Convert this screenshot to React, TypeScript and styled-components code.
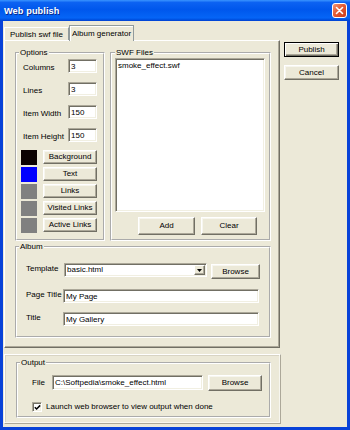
import React from 'react';
import styled, { createGlobalStyle } from 'styled-components';

const GlobalStyle = createGlobalStyle`
  html, body {
    margin: 0;
    padding: 0;
    background: #ffffff;
  }
  body {
    font-family: "Liberation Sans", Arial, sans-serif;
    font-size: 8px;
    color: #000;
  }
`;

const face = '#ece9d8';

const fields = [
  { label: 'Columns', value: '3' },
  { label: 'Lines', value: '3' },
  { label: 'Item Width', value: '150' },
  { label: 'Item Height', value: '150' },
];

const colors = [
  { label: 'Background', swatch: '#0c0202' },
  { label: 'Text', swatch: '#0000ff' },
  { label: 'Links', swatch: '#808080' },
  { label: 'Visited Links', swatch: '#808080' },
  { label: 'Active Links', swatch: '#808080' },
];

// XP style close glyph: rounded red square with a white cross
const CloseIcon = () => (
  <svg width="15" height="15" viewBox="0 0 15 15">
    <defs>
      <linearGradient id="closeFill" x1="0" y1="0" x2="1" y2="1">
        <stop offset="0" stopColor="#f29a7c" />
        <stop offset="0.45" stopColor="#e35d35" />
        <stop offset="1" stopColor="#c8381a" />
      </linearGradient>
    </defs>
    <rect x="0.5" y="0.5" width="14" height="14" rx="2.5" fill="url(#closeFill)" stroke="#ffffff" />
    <path d="M4.5 4.5L10.5 10.5M10.5 4.5L4.5 10.5" stroke="#ffffff" strokeWidth="1.6" strokeLinecap="round" />
  </svg>
);

export default function App() {
  return (
    <>
      <GlobalStyle />
      <Window>
        <TitleBar>
          <Title>Web publish</Title>
          <CloseButton aria-label="Close">
            <CloseIcon />
          </CloseButton>
        </TitleBar>
        <Client>
          <LeftCol>
            <TabStrip>
              <Tab>Publish swf file</Tab>
              <Tab $active>Album generator</Tab>
            </TabStrip>
            <Panel>
              <TopRow>
                <Group $w={90} $h={193}>
                  <Legend>Options</Legend>
                  <OptionsBody>
                    <FieldList>
                      {fields.map(f => (
                        <FieldRow key={f.label}>
                          <FieldLabel>{f.label}</FieldLabel>
                          <TextField $w={29} $h={14} readOnly value={f.value} />
                        </FieldRow>
                      ))}
                    </FieldList>
                    <ColorList>
                      {colors.map(c => (
                        <ColorRow key={c.label}>
                          <Swatch $c={c.swatch} />
                          <Button $w={54} $h={14}>{c.label}</Button>
                        </ColorRow>
                      ))}
                    </ColorList>
                  </OptionsBody>
                </Group>
                <Group $w={161} $h={193}>
                  <Legend $lm={3}>SWF Files</Legend>
                  <SwfBody>
                    <ListBox>
                      <ListItem>smoke_effect.swf</ListItem>
                    </ListBox>
                    <ListButtons>
                      <Button $w={57} $h={18}>Add</Button>
                      <Button $w={56} $h={18}>Clear</Button>
                    </ListButtons>
                  </SwfBody>
                </Group>
              </TopRow>
              <AlbumGroup $w={256} $h={96}>
                <Legend>Album</Legend>
                <AlbumBody>
                  <FormRow $h={16} $mb={10}>
                    <RowLabel>Template</RowLabel>
                    <Select>
                      <SelectText>basic.html</SelectText>
                      <DropButton>
                        <svg width="5" height="3" viewBox="0 0 5 3">
                          <path d="M0 0H5L2.5 3Z" fill="#000" />
                        </svg>
                      </DropButton>
                    </Select>
                    <BrowseButton $w={49} $h={15}>Browse</BrowseButton>
                  </FormRow>
                  <FormRow $h={14} $mb={9}>
                    <RowLabel>Page Title</RowLabel>
                    <TextField $w={196} $h={14} readOnly value="My Page" />
                  </FormRow>
                  <FormRow $h={14} $mb={0}>
                    <RowLabel>Title</RowLabel>
                    <TextField $w={196} $h={14} readOnly value="My Gallery" />
                  </FormRow>
                </AlbumBody>
              </AlbumGroup>
            </Panel>
            <OutputFrame>
              <Group $w={255} $h={60}>
                <Legend>Output</Legend>
                <OutputBody>
                  <FileRow>
                    <FileLabel>File</FileLabel>
                    <TextField $w={151} $h={15} readOnly value="C:\Softpedia\smoke_effect.html" />
                    <Button $w={54} $h={16}>Browse</Button>
                  </FileRow>
                  <CheckRow>
                    <CheckBox>
                      <svg width="7" height="7" viewBox="0 0 7 7">
                        <path d="M0.8 3.2L2.6 5L6.2 1.4" stroke="#000" strokeWidth="1.5" fill="none" />
                      </svg>
                    </CheckBox>
                    <span>Launch web browser to view output when done</span>
                  </CheckRow>
                </OutputBody>
              </Group>
            </OutputFrame>
          </LeftCol>
          <RightCol>
            <Button $w={55} $h={15} $default>Publish</Button>
            <Button $w={55} $h={15}>Cancel</Button>
          </RightCol>
        </Client>
      </Window>
    </>
  );
}

const Window = styled.div`
  width: 350px;
  height: 430px;
  display: flex;
  flex-direction: column;
  overflow: hidden;
`;

const TitleBar = styled.div`
  height: 21px;
  flex: none;
  display: flex;
  align-items: center;
  justify-content: space-between;
  box-sizing: border-box;
  padding: 0 3px 0 4px;
  background: linear-gradient(
    180deg,
    #3a94ff 0%,
    #0c62f2 12%,
    #0057ec 45%,
    #0565f6 85%,
    #0052e2 93%,
    #0040d2 100%
  );
`;

const Title = styled.div`
  color: #fff;
  font-weight: bold;
  font-size: 9.2px;
  letter-spacing: 0.1px;
  text-shadow: 1px 1px 0 #0a2a8a;
  padding-top: 1px;
`;

const CloseButton = styled.div`
  width: 15px;
  height: 15px;
  display: flex;
`;

const Client = styled.div`
  flex: 1;
  display: flex;
  align-items: flex-start;
  background: ${face};
  border: 3px solid #0842d8;
  border-top: none;
  padding: 4px 0 0 1px;
`;

const LeftCol = styled.div`
  width: 277px;
  display: flex;
  flex-direction: column;
`;

const RightCol = styled.div`
  display: flex;
  flex-direction: column;
  gap: 8px;
  margin: 17px 0 0 3px;
`;

const TabStrip = styled.div`
  height: 15px;
  display: flex;
  align-items: flex-end;
`;

const Tab = styled.div<{ $active?: boolean }>`
  position: relative;
  z-index: ${p => (p.$active ? 1 : 0)};
  box-sizing: border-box;
  height: ${p => (p.$active ? 16 : 13)}px;
  width: 65px;
  margin-bottom: ${p => (p.$active ? -1 : 0)}px;
  background: ${face};
  border: 1px solid #919b9c;
  border-bottom: none;
  border-left-color: ${p => (p.$active ? '#919b9c' : '#fff')};
  border-top-color: ${p => (p.$active ? '#919b9c' : '#fff')};
  box-shadow: ${p => (p.$active ? 'inset 1px 1px 0 #fff' : 'none')};
  display: flex;
  align-items: center;
  justify-content: center;
  line-height: 10px;
  padding-top: ${p => (p.$active ? 0 : 1)}px;
`;

const Panel = styled.div`
  width: 276px;
  height: 308px;
  box-sizing: border-box;
  border: 1px solid;
  border-color: #fff #716f64 #716f64 #fff;
  box-shadow: inset -1px -1px 0 #aca899;
  padding: 7px 0 0 10px;
  display: flex;
  flex-direction: column;
`;

const TopRow = styled.div`
  display: flex;
  gap: 5px;
`;

const Group = styled.fieldset<{ $w: number; $h: number }>`
  margin: 0;
  padding: 0;
  min-width: 0;
  width: ${p => p.$w}px;
  height: ${p => p.$h}px;
  box-sizing: border-box;
  border: 2px groove #ffffff;
`;

const AlbumGroup = styled(Group)`
  margin-top: 1px;
`;

const Legend = styled.legend<{ $lm?: number }>`
  padding: 0 1px;
  margin-left: ${p => p.$lm ?? 2}px;
  font-size: 8px;
  line-height: 10px;
`;

const OptionsBody = styled.div`
  padding: 1px 0 0 4px;
`;

const FieldList = styled.div`
  display: flex;
  flex-direction: column;
  gap: 9px;
`;

const FieldRow = styled.div`
  width: 74px;
  height: 14px;
  padding-left: 2px;
  display: flex;
  align-items: center;
  justify-content: space-between;
`;

const FieldLabel = styled.span`
  padding-top: 3px;
`;

const ColorList = styled.div`
  margin-top: 8px;
  display: flex;
  flex-direction: column;
  gap: 2px;
`;

const ColorRow = styled.div`
  height: 15px;
  display: flex;
  align-items: flex-start;
  gap: 6px;
`;

const Swatch = styled.div<{ $c: string }>`
  width: 16px;
  height: 15px;
  background: ${p => p.$c};
`;

const Button = styled.div<{ $w: number; $h: number; $default?: boolean }>`
  flex: none;
  width: ${p => p.$w}px;
  height: ${p => p.$h}px;
  box-sizing: border-box;
  background: ${face};
  border: 1px solid;
  border-color: ${p => (p.$default ? '#000' : '#fff #716f64 #716f64 #fff')};
  box-shadow: ${p =>
    p.$default
      ? 'inset 1px 1px 0 #fff, inset -1px -1px 0 #716f64, inset -2px -2px 0 #aca899'
      : 'inset -1px -1px 0 #aca899, inset 1px 1px 0 #f7f6ef'};
  display: flex;
  align-items: center;
  justify-content: center;
  line-height: 10px;
  white-space: nowrap;
`;

const BrowseButton = styled(Button)`
  margin: 1px 0 0 4px;
`;

const TextField = styled.input<{ $w: number; $h: number }>`
  flex: none;
  width: ${p => p.$w}px;
  height: ${p => p.$h}px;
  box-sizing: border-box;
  margin: 0;
  padding: 0 0 0 2px;
  background: #fff;
  border: 1px solid;
  border-color: #aca899 #fff #fff #aca899;
  box-shadow: inset 1px 1px 0 #716f64, inset -1px -1px 0 #f1efe2;
  font-family: "Liberation Sans", Arial, sans-serif;
  font-size: 8px;
  color: #000;
  outline: none;
`;

const SwfBody = styled.div`
  padding: 0 0 0 3px;
`;

const ListBox = styled.div`
  width: 150px;
  height: 154px;
  box-sizing: border-box;
  background: #fff;
  border: 1px solid;
  border-color: #aca899 #fff #fff #aca899;
  box-shadow: inset 1px 1px 0 #716f64, inset -1px -1px 0 #f1efe2;
  padding: 2px 0 0 2px;
`;

const ListItem = styled.div`
  line-height: 10px;
`;

const ListButtons = styled.div`
  width: 150px;
  box-sizing: border-box;
  margin-top: 5px;
  padding-right: 8px;
  display: flex;
  justify-content: flex-end;
  gap: 6px;
`;

const AlbumBody = styled.div`
  padding: 11px 0 0 9px;
`;

const FormRow = styled.div<{ $h: number; $mb: number }>`
  height: ${p => p.$h}px;
  margin-bottom: ${p => p.$mb}px;
  display: flex;
  align-items: flex-start;
`;

const RowLabel = styled.span`
  width: 37px;
  flex: none;
  line-height: 12px;
`;

const Select = styled.div`
  width: 143px;
  height: 14px;
  margin-left: 1px;
  box-sizing: border-box;
  background: #fff;
  border: 1px solid;
  border-color: #aca899 #fff #fff #aca899;
  box-shadow: inset 1px 1px 0 #716f64, inset -1px -1px 0 #f1efe2;
  display: flex;
  align-items: center;
  padding: 1px 1px 1px 2px;
`;

const SelectText = styled.span`
  flex: 1;
  line-height: 10px;
`;

const DropButton = styled.div`
  width: 11px;
  height: 10px;
  box-sizing: border-box;
  background: ${face};
  border: 1px solid;
  border-color: #fff #716f64 #716f64 #fff;
  box-shadow: inset -1px -1px 0 #aca899;
  display: flex;
  align-items: center;
  justify-content: center;
`;

const OutputFrame = styled.div`
  margin-top: 6px;
  width: 277px;
  height: 70px;
  box-sizing: border-box;
  border: 1px solid;
  border-color: #fff #aca899 #aca899 #fff;
  box-shadow: inset -1px -1px 0 #f7f6ef, inset 1px 1px 0 #d8d4c4;
  padding: 3px 0 0 11px;
`;

const OutputBody = styled.div`
  padding: 7px 0 0 14px;
`;

const FileRow = styled.div`
  display: flex;
  align-items: flex-start;
  gap: 5px;
`;

const FileLabel = styled.span`
  width: 15px;
  line-height: 15px;
`;

const CheckRow = styled.div`
  margin-top: 11px;
  display: flex;
  align-items: center;
  gap: 4px;
  line-height: 10px;
`;

const CheckBox = styled.div`
  width: 10px;
  height: 10px;
  box-sizing: border-box;
  background: #fff;
  border: 1px solid;
  border-color: #aca899 #fff #fff #aca899;
  box-shadow: inset 1px 1px 0 #716f64, inset -1px -1px 0 #f1efe2;
  display: flex;
  align-items: center;
  justify-content: center;
`;
